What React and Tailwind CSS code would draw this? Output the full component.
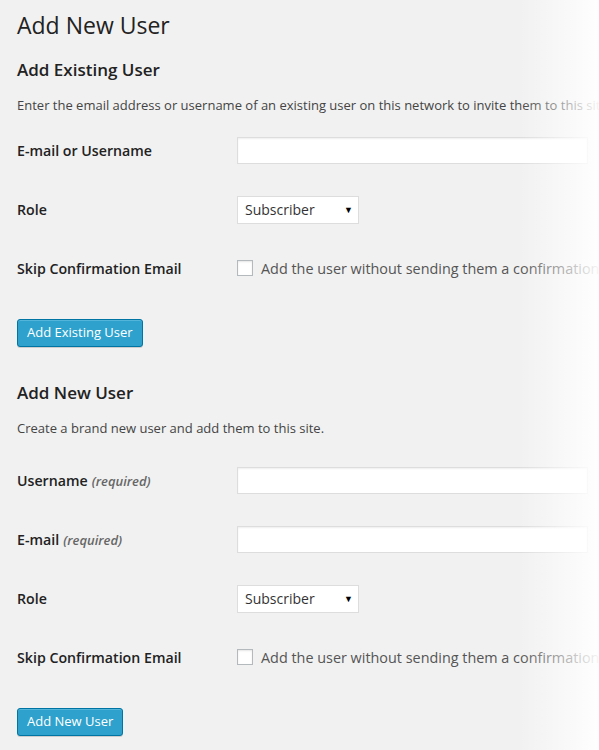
const font = { fontFamily: '"Open Sans", "Noto Sans", sans-serif' };

const TextInput = () => (
  <div className="h-[27px] w-[351px] border border-[#dddddd] bg-white shadow-[inset_0_1px_2px_rgba(0,0,0,0.07)]" />
);

const RoleSelect = () => (
  <div className="flex h-[28px] w-[122px] items-center justify-between border border-[#dddddd] bg-white pl-[7px] pr-[5px] text-[14px] text-[#333]">
    <span>Subscriber</span>
    <span className="text-[9px] text-black">▼</span>
  </div>
);

const SkipCheckbox = () => (
  <div className="flex items-center whitespace-nowrap">
    <span className="h-[16px] w-[16px] shrink-0 border border-[#b4b9be] bg-white shadow-[inset_0_1px_2px_rgba(0,0,0,0.1)]" />
    <span className="ml-[8px] text-[14.4px] text-[#555]">
      Add the user without sending them a confirmation email.
    </span>
  </div>
);

const Row = ({ label, hint, children }) => (
  <div className="flex h-[59px] items-center">
    <div className="w-[220px] shrink-0 text-[14.2px] font-semibold text-[#222]">
      {label}
      {hint && <span className="ml-1 text-[13px] font-semibold italic text-[#666]">{hint}</span>}
    </div>
    {children}
  </div>
);

const Button = ({ children }) => (
  <button className="h-[28px] rounded-[3px] border border-[#0074a2] bg-[#2ea2cc] px-[9px] text-[13px] text-white shadow-[inset_0_1px_0_rgba(120,200,230,0.5),0_1px_0_rgba(0,0,0,0.15)]">
    {children}
  </button>
);

export default function App() {
  return (
    <div className="relative h-[750px] w-full overflow-hidden bg-[#f1f1f1]" style={font}>
      <div className="pl-[17px] pt-[11px]">
        <h1 className="text-[23px] leading-[29px] text-[#222]">Add New User</h1>

        {/* existing user */}
        <h2 className="mt-[18px] text-[17px] font-semibold leading-[24px] text-[#222]">Add Existing User</h2>
        <p className="mt-[13px] whitespace-nowrap text-[13px] leading-[20px] text-[#444]">
          Enter the email address or username of an existing user on this network to invite them to this site.
        </p>
        <div className="mt-[6px]">
          <Row label="E-mail or Username">
            <TextInput />
          </Row>
          <Row label="Role">
            <RoleSelect />
          </Row>
          <Row label="Skip Confirmation Email">
            <SkipCheckbox />
          </Row>
        </div>
        <div className="mt-[21px]">
          <Button>Add Existing User</Button>
        </div>

        {/* new user */}
        <h2 className="mt-[34px] text-[17px] font-semibold leading-[24px] text-[#222]">Add New User</h2>
        <p className="mt-[13px] text-[13px] leading-[20px] text-[#444]">Create a brand new user and add them to this site.</p>
        <div className="mt-[13px]">
          <Row label="Username" hint="(required)">
            <TextInput />
          </Row>
          <Row label="E-mail" hint="(required)">
            <TextInput />
          </Row>
          <Row label="Role">
            <RoleSelect />
          </Row>
          <Row label="Skip Confirmation Email">
            <SkipCheckbox />
          </Row>
        </div>
        <div className="mt-[21px]">
          <Button>Add New User</Button>
        </div>
      </div>

      {/* fade on the right edge */}
      <div className="pointer-events-none absolute right-0 top-0 h-full w-[80px] bg-gradient-to-r from-[rgba(255,255,255,0)] to-[rgba(255,255,255,0.95)]" />
    </div>
  );
}
